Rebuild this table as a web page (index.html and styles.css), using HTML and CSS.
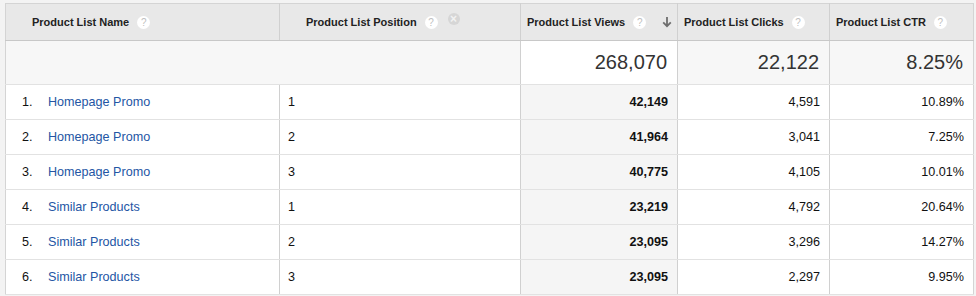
FILE: index.html
```html
<!DOCTYPE html>
<html>
<head>
<meta charset="utf-8">
<link rel="stylesheet" href="styles.css">
</head>
<body>
<table class="report">
  <colgroup>
    <col class="c-name"><col class="c-pos"><col class="c-views"><col class="c-clicks"><col class="c-ctr">
  </colgroup>
  <thead>
    <tr>
      <th class="h-text"><span class="hlabel">Product List Name</span><span class="help">?</span></th>
      <th class="h-text"><span class="hlabel">Product List Position</span><span class="help">?</span><span class="close">&#215;</span></th>
      <th class="h-num h-sorted"><span class="hlabel">Product List Views</span><span class="help">?</span><svg class="sort" width="10" height="12" viewBox="0 0 10 12"><path d="M5 1v9M1.2 6.4 5 10.2 8.8 6.4" fill="none" stroke="#6e6e6e" stroke-width="1.8"/></svg></th>
      <th class="h-num"><span class="hlabel">Product List Clicks</span><span class="help">?</span></th>
      <th class="h-num"><span class="hlabel">Product List CTR</span><span class="help">?</span></th>
    </tr>
  </thead>
  <tbody>
    <tr class="totals">
      <td colspan="2"></td>
      <td class="num sorted-total">268,070</td>
      <td class="num">22,122</td>
      <td class="num">8.25%</td>
    </tr>
    <tr>
      <td><span class="idx">1.</span><a class="link" href="#">Homepage Promo</a></td>
      <td class="pos">1</td>
      <td class="num sorted">42,149</td>
      <td class="num">4,591</td>
      <td class="num">10.89%</td>
    </tr>
    <tr>
      <td><span class="idx">2.</span><a class="link" href="#">Homepage Promo</a></td>
      <td class="pos">2</td>
      <td class="num sorted">41,964</td>
      <td class="num">3,041</td>
      <td class="num">7.25%</td>
    </tr>
    <tr>
      <td><span class="idx">3.</span><a class="link" href="#">Homepage Promo</a></td>
      <td class="pos">3</td>
      <td class="num sorted">40,775</td>
      <td class="num">4,105</td>
      <td class="num">10.01%</td>
    </tr>
    <tr>
      <td><span class="idx">4.</span><a class="link" href="#">Similar Products</a></td>
      <td class="pos">1</td>
      <td class="num sorted">23,219</td>
      <td class="num">4,792</td>
      <td class="num">20.64%</td>
    </tr>
    <tr>
      <td><span class="idx">5.</span><a class="link" href="#">Similar Products</a></td>
      <td class="pos">2</td>
      <td class="num sorted">23,095</td>
      <td class="num">3,296</td>
      <td class="num">14.27%</td>
    </tr>
    <tr>
      <td><span class="idx">6.</span><a class="link" href="#">Similar Products</a></td>
      <td class="pos">3</td>
      <td class="num sorted">23,095</td>
      <td class="num">2,297</td>
      <td class="num">9.95%</td>
    </tr>
  </tbody>
</table>
</body>
</html>
```
FILE: styles.css
```css
html, body {
  margin: 0;
  padding: 0;
}
body {
  background: #f3f3f3;
  font-family: "Liberation Sans", Arial, Helvetica, sans-serif;
  color: #222;
  padding: 3px 3px 0 5px;
}
.report {
  border-collapse: collapse;
  table-layout: fixed;
  width: 968px;
  background: #fff;
  border: 1px solid #d4d4d4;
}
.c-name { width: 274px; }
.c-pos { width: 241px; }
.c-views { width: 157px; }
.c-clicks { width: 152px; }
.c-ctr { width: 144px; }

th {
  height: 36px;
  padding: 0;
  background: #e8e8e8;
  border-left: 1px solid #d0d0d0;
  border-bottom: 1px solid #c8c8c8;
  font-size: 11px;
  font-weight: bold;
  color: #222;
  text-align: left;
  white-space: nowrap;
}
.h-text { padding-left: 26px; }
.h-num { padding-left: 6px; }
.hlabel {
  display: inline-block;
  vertical-align: middle;
}
.help {
  display: inline-block;
  vertical-align: middle;
  width: 13px;
  height: 13px;
  margin-left: 8px;
  border-radius: 50%;
  background: #fff;
  color: #c0c0c0;
  font-size: 10px;
  font-weight: normal;
  line-height: 13px;
  text-align: center;
}
.close {
  display: inline-block;
  vertical-align: middle;
  width: 12px;
  height: 12px;
  margin-left: 10px;
  margin-top: -7px;
  border-radius: 50%;
  background: #d6d6d6;
  color: #f2f2f2;
  font-size: 12px;
  font-weight: bold;
  line-height: 12px;
  text-align: center;
}
.sort {
  display: inline-block;
  vertical-align: middle;
  margin-left: 16px;
}

td {
  height: 34px;
  padding: 0;
  border-left: 1px solid #d0d0d0;
  border-bottom: 1px solid #e2e2e2;
  font-size: 12.6px;
  color: #111;
  white-space: nowrap;
}
td:first-child, th:first-child { border-left: none; }

.totals td {
  height: 43px;
  background: #f7f7f7;
  font-size: 20px;
  color: #333;
}
.totals td.sorted-total { background: #fff; }

.num {
  text-align: right;
  padding-right: 9px;
}
.totals .num { padding-right: 10px; }
.sorted {
  background: #f5f5f5;
  font-weight: bold;
}
.pos { padding-left: 8px; }
.idx {
  display: inline-block;
  width: 26px;
  padding-left: 16px;
  text-align: left;
  box-sizing: content-box;
}
.link {
  color: #2455a4;
  text-decoration: none;
}
```
